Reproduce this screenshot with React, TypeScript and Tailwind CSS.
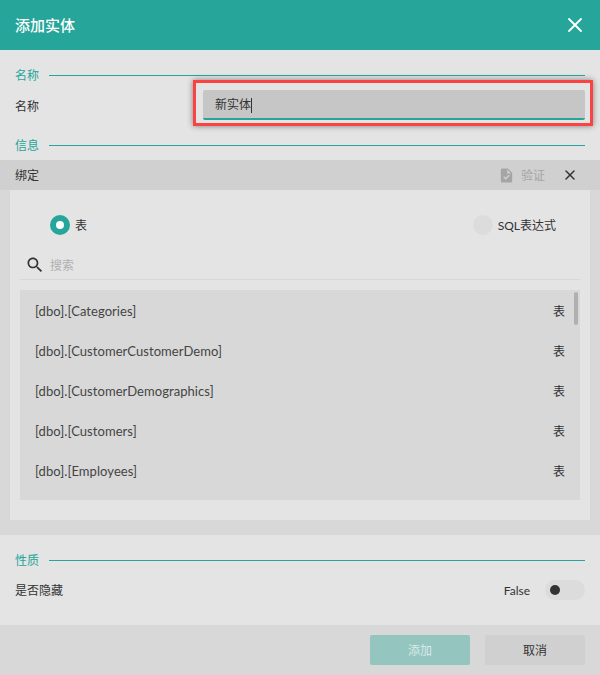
import { X } from 'lucide-react';

const TABLES = ['Categories', 'CustomerCustomerDemo', 'CustomerDemographics', 'Customers', 'Employees'];

function SectionTitle({ label }: { label: string }) {
  return (
    <div className="flex items-center h-5 px-[15px]">
      <span className="text-[12px] leading-5 pt-px text-[#26a69a] w-[34px] shrink-0">{label}</span>
      <div className="h-px flex-1 bg-[#26a69a]" />
    </div>
  );
}

export default function App() {
  return (
    <div
      className="relative w-[600px] h-[675px] overflow-hidden bg-[#e4e4e4] text-[12px] text-[#333333] flex flex-col"
      style={{ fontFamily: 'Lato, "Noto Sans CJK SC", sans-serif' }}
    >
      <div className="h-[50px] shrink-0 bg-[#26a69a] flex items-center justify-between pl-[15px] pr-[13px]">
        <span className="text-[15px] font-medium text-white">添加实体</span>
        <X size={24} strokeWidth={1.8} className="text-white" />
      </div>

      <div className="pt-[15px]">
        <SectionTitle label="名称" />
      </div>
      <div className="flex items-center h-[30px] mt-[5px] pl-[15px] pr-[15px]">
        <span className="w-[188px] pt-[3px]">名称</span>
        <div className="flex-1 h-[30px] bg-[#c6c6c6] rounded-[2px] border-b-2 border-[#26a69a] flex items-center pl-[12px] pt-[2px]">
          <span>新实体</span>
          <span className="w-px h-[15px] bg-[#333333]" />
        </div>
      </div>
      <div className="pt-[15px]">
        <SectionTitle label="信息" />
      </div>

      <div className="h-[30px] mt-[5px] shrink-0 bg-[#d0d0d0] flex items-center pl-[15px] pr-[22px]">
        <span className="flex-1 pt-[2px]">绑定</span>
        <svg viewBox="0 0 24 24" className="w-[17px] h-[17px] fill-[#a5a5a5] mr-[6px]">
          <path d="M14 2H6c-1.1 0-2 .9-2 2v16c0 1.1.9 2 2 2h12c1.1 0 2-.9 2-2V8l-6-6zm-3.06 16L7.4 14.46l1.41-1.41 2.12 2.12 4.24-4.24 1.41 1.41L10.94 18zM13 9V3.5L18.5 9H13z" />
        </svg>
        <span className="text-[#a5a5a5] mr-[17px] pt-[2px]">验证</span>
        <X size={16} strokeWidth={2.2} className="text-[#333333]" />
      </div>

      <div className="h-[345px] shrink-0 bg-[#d8d8d8] px-[10px] pb-[15px]">
        <div className="h-[330px] bg-[#e4e4e4] px-[10px] pt-[25px]">
          <div className="flex items-center justify-between h-5 pl-[30px] pr-[24px]">
            <div className="flex items-center gap-[5px]">
              <div className="w-5 h-5 rounded-full bg-[#26a69a] flex items-center justify-center">
                <div className="w-2 h-2 rounded-full bg-white" />
              </div>
              <span className="pt-[2px]">表</span>
            </div>
            <div className="flex items-center gap-[5px]">
              <div className="w-5 h-5 rounded-full bg-[#dcdcdc]" />
              <span className="pt-[2px]">SQL表达式</span>
            </div>
          </div>
          <div className="flex items-center h-[25px] mt-[20px] pl-[5px] border-b border-[#d8d8d8] gap-[5px]">
            <svg viewBox="0 0 24 24" className="w-5 h-5 fill-[#333333] -mt-[5px]">
              <path d="M15.5 14h-.79l-.28-.27C15.41 12.59 16 11.11 16 9.5 16 5.91 13.09 3 9.5 3S3 5.91 3 9.5 5.91 16 9.5 16c1.61 0 3.09-.59 4.23-1.57l.27.28v.79l5 4.99L20.49 19l-4.99-5zm-6 0C7.01 14 5 11.99 5 9.5S7.01 5 9.5 5 14 7.01 14 9.5 11.99 14 9.5 14z" />
            </svg>
            <span className="text-[#b0b0b0] -mt-[3px]">搜索</span>
          </div>
          <div className="relative mt-[10px] h-[210px] bg-[#d8d8d8] overflow-hidden">
            {TABLES.map((name) => (
              <div key={name} className="h-10 flex items-center justify-between pl-[15px] pr-[15px] pt-[3px]">
                <span className="text-[13px] tracking-[0.06px] text-[#444444]">[dbo].[{name}]</span>
                <span>表</span>
              </div>
            ))}
            <div className="absolute right-[2px] top-[2px] w-1 h-[33px] rounded-full bg-[#b0b0b0]" />
          </div>
        </div>
      </div>

      <div className="pt-[15px]">
        <SectionTitle label="性质" />
      </div>
      <div className="flex items-center justify-between h-5 mt-[10px] px-[15px]">
        <span className="pt-[2px]">是否隐藏</span>
        <div className="flex items-center gap-[15px]">
          <span className="pt-[2px]">False</span>
          <div className="w-10 h-5 rounded-full bg-[#dcdcdc] flex items-center pl-[5px]">
            <div className="w-[10px] h-[10px] rounded-full bg-[#333333]" />
          </div>
        </div>
      </div>

      <div className="mt-[25px] h-[50px] bg-[#d8d8d8] flex items-center justify-end gap-[15px] pr-[15px]">
        <div className="w-[100px] h-[30px] rounded-[2px] bg-[#95c5bf] text-[#d8ebe8] flex items-center justify-center pt-[2px]">添加</div>
        <div className="w-[100px] h-[30px] rounded-[2px] bg-[#d0d0d0] flex items-center justify-center pt-[2px]">取消</div>
      </div>

      {/* red annotation round the name input */}
      <div className="absolute left-[193px] top-[80px] w-[400px] h-[46px] border-[3px] border-[#fb4343] shadow-[0_0_6px_rgba(0,0,0,0.45)]" />
    </div>
  );
}
